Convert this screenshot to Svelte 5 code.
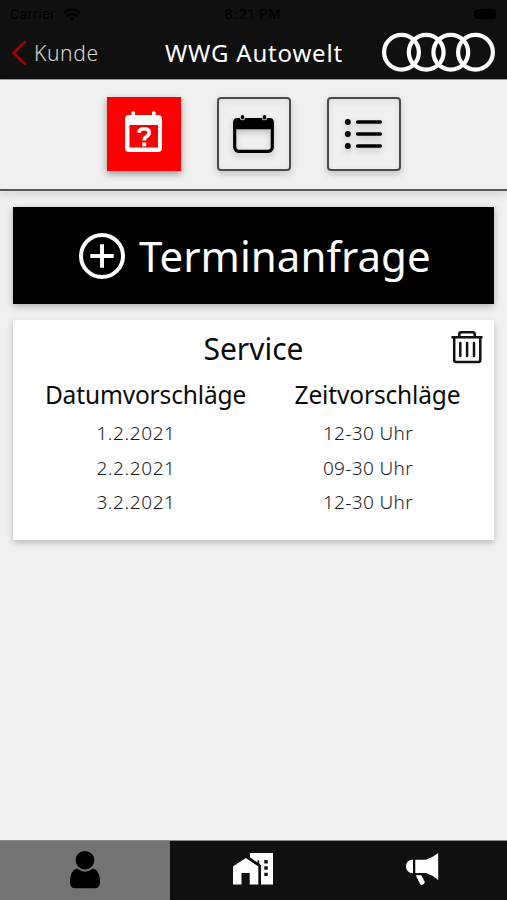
<script>
  const proposals = [
    { date: '1.2.2021', time: '12-30 Uhr' },
    { date: '2.2.2021', time: '09-30 Uhr' },
    { date: '3.2.2021', time: '12-30 Uhr' }
  ];
</script>

<div class="app">
  <div class="status">
    <span class="carrier">Carrier
      <svg width="18" height="13" viewBox="0 0 18 13" fill="none" stroke="#000" stroke-width="2.6"><path d="M1 5Q9-2 17 5M4 8.2Q9 4 14 8.2" /><path d="M6.3 10Q9 7.5 11.7 10L9 12.8Z" fill="#000" stroke="none" /></svg>
    </span>
    <span class="clock">8:21 PM</span>
    <span class="battery"><i></i></span>
  </div>

  <header>
    <button class="back">
      <svg width="16" height="26" viewBox="0 0 16 26" fill="none" stroke="#a80000" stroke-width="2.6" stroke-linecap="round"><path d="M14 2L2.5 13L14 24" /></svg>
      <span>Kunde</span>
    </button>
    <h1>WWG Autowelt</h1>
    <svg class="rings" width="114" height="40" viewBox="0 0 114 40" fill="none" stroke="#fff" stroke-width="4.2"><circle cx="19.5" cy="20.3" r="17.4" /><circle cx="44.2" cy="20.3" r="17.4" /><circle cx="68.8" cy="20.3" r="17.4" /><circle cx="93.5" cy="20.3" r="17.4" /></svg>
  </header>

  <nav class="tabs">
    <button class="tab active" aria-label="Terminanfrage">
      <svg width="74" height="74" viewBox="0 0 74 74"><path fill="#fff" fill-rule="evenodd" d="M24.5 15.5Q24.5 14 26.2 14T28 15.5V18H45V15.5Q45 14 46.8 14T48.6 15.5V18H51Q55 18 55 22V51Q55 55 51 55H22Q18 55 18 51V22Q18 18 22 18H24.5ZM22.5 28V50.5H51V28Z" /><path d="M31.8 35.8Q32.5 31.8 37 31.8Q42.2 31.8 42.2 35.6Q42.2 38 39.4 39.8Q37.2 41.2 37.2 43.6" fill="none" stroke="#fff" stroke-width="3.6" /><path fill="#fff" d="M35.2 45.5h4v3.8h-4z" /></svg>
    </button>
    <button class="tab" aria-label="Kalender">
      <svg class="lift" width="74" height="74" viewBox="0 0 74 74"><rect x="17.7" y="22.7" width="37.6" height="31.6" rx="4" fill="none" stroke="#000" stroke-width="3.2" /><path d="M16.2 32V25Q16.2 21 20.2 21H52.7Q56.7 21 56.7 25V32.3H16.2ZM23.8 19.5Q23.8 18 25.5 18T27.2 19.5V23H23.8ZM45.8 19.5Q45.8 18 47.5 18T49.2 19.5V23H45.8Z" /><path d="M23.6 20.5v2.2h3.8v-2.2M45.6 20.5v2.2h3.8v-2.2" fill="none" stroke="#ddd" stroke-width="0.8" /></svg>
    </button>
    <button class="tab" aria-label="Liste">
      <svg class="lift" width="74" height="74" viewBox="0 0 74 74"><g stroke="#000" stroke-width="3.4" stroke-linecap="round"><path d="M30.7 25H53.3M30.7 37H53.3M30.7 49H53.3" /></g><circle cx="20.8" cy="25" r="3" /><circle cx="20.8" cy="37" r="3" /><circle cx="20.8" cy="49" r="3" /></svg>
    </button>
  </nav>

  <main>
    <button class="request">
      <svg width="48" height="48" viewBox="0 0 48 48" fill="none" stroke="#fff" stroke-width="4"><circle cx="24" cy="24" r="21" /><path d="M24 12.3V35.7M12.3 24H35.7" /></svg>
      <span>Terminanfrage</span>
    </button>

    <section class="card">
      <h2>Service</h2>
      <button class="trash" aria-label="Löschen">
        <svg width="34" height="34" viewBox="0 0 34 34" fill="none" stroke="#111" stroke-width="2.5" stroke-linejoin="round"><path d="M1.5 7.2H32.5M4.2 7.5V30Q4.2 32 6.2 32H28.3Q30.3 32 30.3 30V7.5M9.3 7V4Q9.3 2.3 11 2.3H23Q24.7 2.3 24.7 4V7" /><path d="M10.3 13V26M17.1 13V26M24 13V26" stroke-linecap="round" /></svg>
      </button>
      <div class="heads">
        <h3>Datumvorschläge</h3>
        <h3>Zeitvorschläge</h3>
      </div>
      {#each proposals as p}
        <div class="row"><p>{p.date}</p><p>{p.time}</p></div>
      {/each}
    </section>
  </main>

  <nav class="bottom">
    <button class="active" aria-label="Profil">
      <svg width="32" height="40" viewBox="0 0 32 40"><path d="M8 18.5Q16 24.8 24 18.5Q31 20.5 31 32Q31 38.3 25.5 38.3H6.5Q1 38.3 1 32Q1 20.5 8 18.5Z" /><circle cx="16" cy="10.2" r="9.3" /></svg>
    </button>
    <button aria-label="Autohaus">
      <svg width="42" height="34" viewBox="0 0 42 34"><path fill="#fff" d="M1 32.5V14.5L13.8 6L26.3 14.5V32.5H17.7V21H9.5V32.5Z" /><path fill="#fff" d="M18 1H41V32.5H29V13L18 5.2Z" /><path d="M32.3 8h3.4v3.4h-3.4zM32.3 14.3h3.4v3.4h-3.4zM32.3 20.7h3.4v3.4h-3.4zM25.6 8.2h1.6v4h-1.6z" fill="#101010" /></svg>
    </button>
    <button aria-label="Neuigkeiten">
      <svg width="34" height="34" viewBox="0 0 34 34" fill="#fff"><path d="M8 7.5V21.3Q1 20.5 1 14.4T8 7.5ZM10.3 7.7H20.8Q27 6 33.2 1V28Q27 22.7 20.8 21H10.3ZM10.8 23.2H16.3L19.7 29.8Q20 31.3 18.7 32.1L17 33Q15.7 33.2 15 32Z" /></svg>
    </button>
  </nav>
</div>

<style>
  .app {
    width: 507px;
    height: 900px;
    display: flex;
    flex-direction: column;
    background: #f0f0f0;
    color: #0c0c0c;
    font-family: 'Noto Sans', 'Open Sans', sans-serif;
    overflow: hidden;
  }
  button { border: 0; padding: 0; margin: 0; background: none; font: inherit; color: inherit; }
  svg { display: block; flex: none; }
  h1, h2, h3, p { margin: 0; font-weight: 400; white-space: nowrap; }
  .status {
    height: 28px;
    flex: none;
    display: grid;
    grid-template-columns: 1fr auto 1fr;
    align-items: center;
    background: #101010;
    color: #000;
    padding: 0 11px 0 10px;
    font: 13px/28px 'Inter', 'Liberation Sans', sans-serif;
  }
  .carrier { display: flex; align-items: center; gap: 8px; letter-spacing: 0.4px; }
  .clock { font-weight: 500; letter-spacing: 1.1px; }
  .battery { justify-self: end; }
  .battery i { display: block; width: 22px; height: 10px; border-radius: 3px; background: #000; }
  header {
    height: 52px;
    flex: none;
    display: grid;
    grid-template-columns: 165px 1fr 125px;
    align-items: start;
    background: #101010;
    border-bottom: 1px solid #a0a0a0;
    box-sizing: border-box;
  }
  .back { display: flex; align-items: center; padding: 12px 0 0 11px; height: 38px; gap: 7px; font-size: 21px; line-height: 26px; color: #d8d8d8; font-weight: 300; letter-spacing: 0.6px; }
  h1 { font-size: 24px; line-height: 30px; padding-top: 10px; color: #fff; letter-spacing: 0.8px; }
  .rings { margin-top: 4px; }
  .tabs {
    height: 111px;
    flex: none;
    box-sizing: border-box;
    border-bottom: 2px solid #555;
    display: flex;
    justify-content: center;
    gap: 36px;
    padding-top: 17px;
    box-shadow: 0 3px 9px rgba(0, 0, 0, 0.12);
  }
  .tab { width: 74px; height: 74px; box-sizing: border-box; border: 2px solid #4b4b4b; border-radius: 4px; box-shadow: 0 3px 7px rgba(0, 0, 0, 0.18), inset 0 2px 7px rgba(0, 0, 0, 0.08); }
  .tab svg { margin: -2px; }
  .tab.active { border-color: #ff0000; border-radius: 0; background: #ff0000; box-shadow: 0 3px 7px rgba(0, 0, 0, 0.38); }
  .lift { filter: drop-shadow(0 3px 3px rgba(0, 0, 0, 0.22)); }
  main { flex: 1; padding: 16px 13px 0; }
  .request {
    width: 481px;
    height: 97px;
    display: flex;
    align-items: center;
    background: #000;
    color: #fff;
    padding-left: 65px;
    gap: 13px;
    font-size: 42px;
    line-height: 60px;
    letter-spacing: 0.05px;
    box-shadow: 0 2px 7px rgba(0, 0, 0, 0.3);
  }
  .card { position: relative; height: 220px; margin-top: 16px; background: #fff; box-shadow: 0 3px 6px rgba(0, 0, 0, 0.22); }
  h2 { text-align: center; font-size: 30px; line-height: 40px; padding-top: 9px; }
  .trash { position: absolute; top: 10px; right: 10px; }
  .heads, .row { display: grid; text-align: center; }
  .heads { grid-template-columns: 265px 199px; margin: 9px 0 4px; }
  .row { grid-template-columns: 246px 218px; }
  h3 { font-size: 24.5px; line-height: 34px; letter-spacing: -0.15px; }
  p { font-size: 19px; line-height: 34.7px; color: #181818; font-weight: 300; letter-spacing: 0.6px; }
  .row p + p { letter-spacing: 0.35px; }
  .bottom { flex: none; height: 60px; box-sizing: border-box; border-top: 1px solid #8a8a8a; background: #101010; display: grid; grid-template-columns: 169.5px 168.5px 169px; }
  .bottom button { display: flex; justify-content: center; align-items: center; padding-bottom: 2px; }
  .bottom button + button { padding-right: 1px; padding-bottom: 3px; }
  .bottom button.active { background: #737373; padding-bottom: 1px; }
</style>
